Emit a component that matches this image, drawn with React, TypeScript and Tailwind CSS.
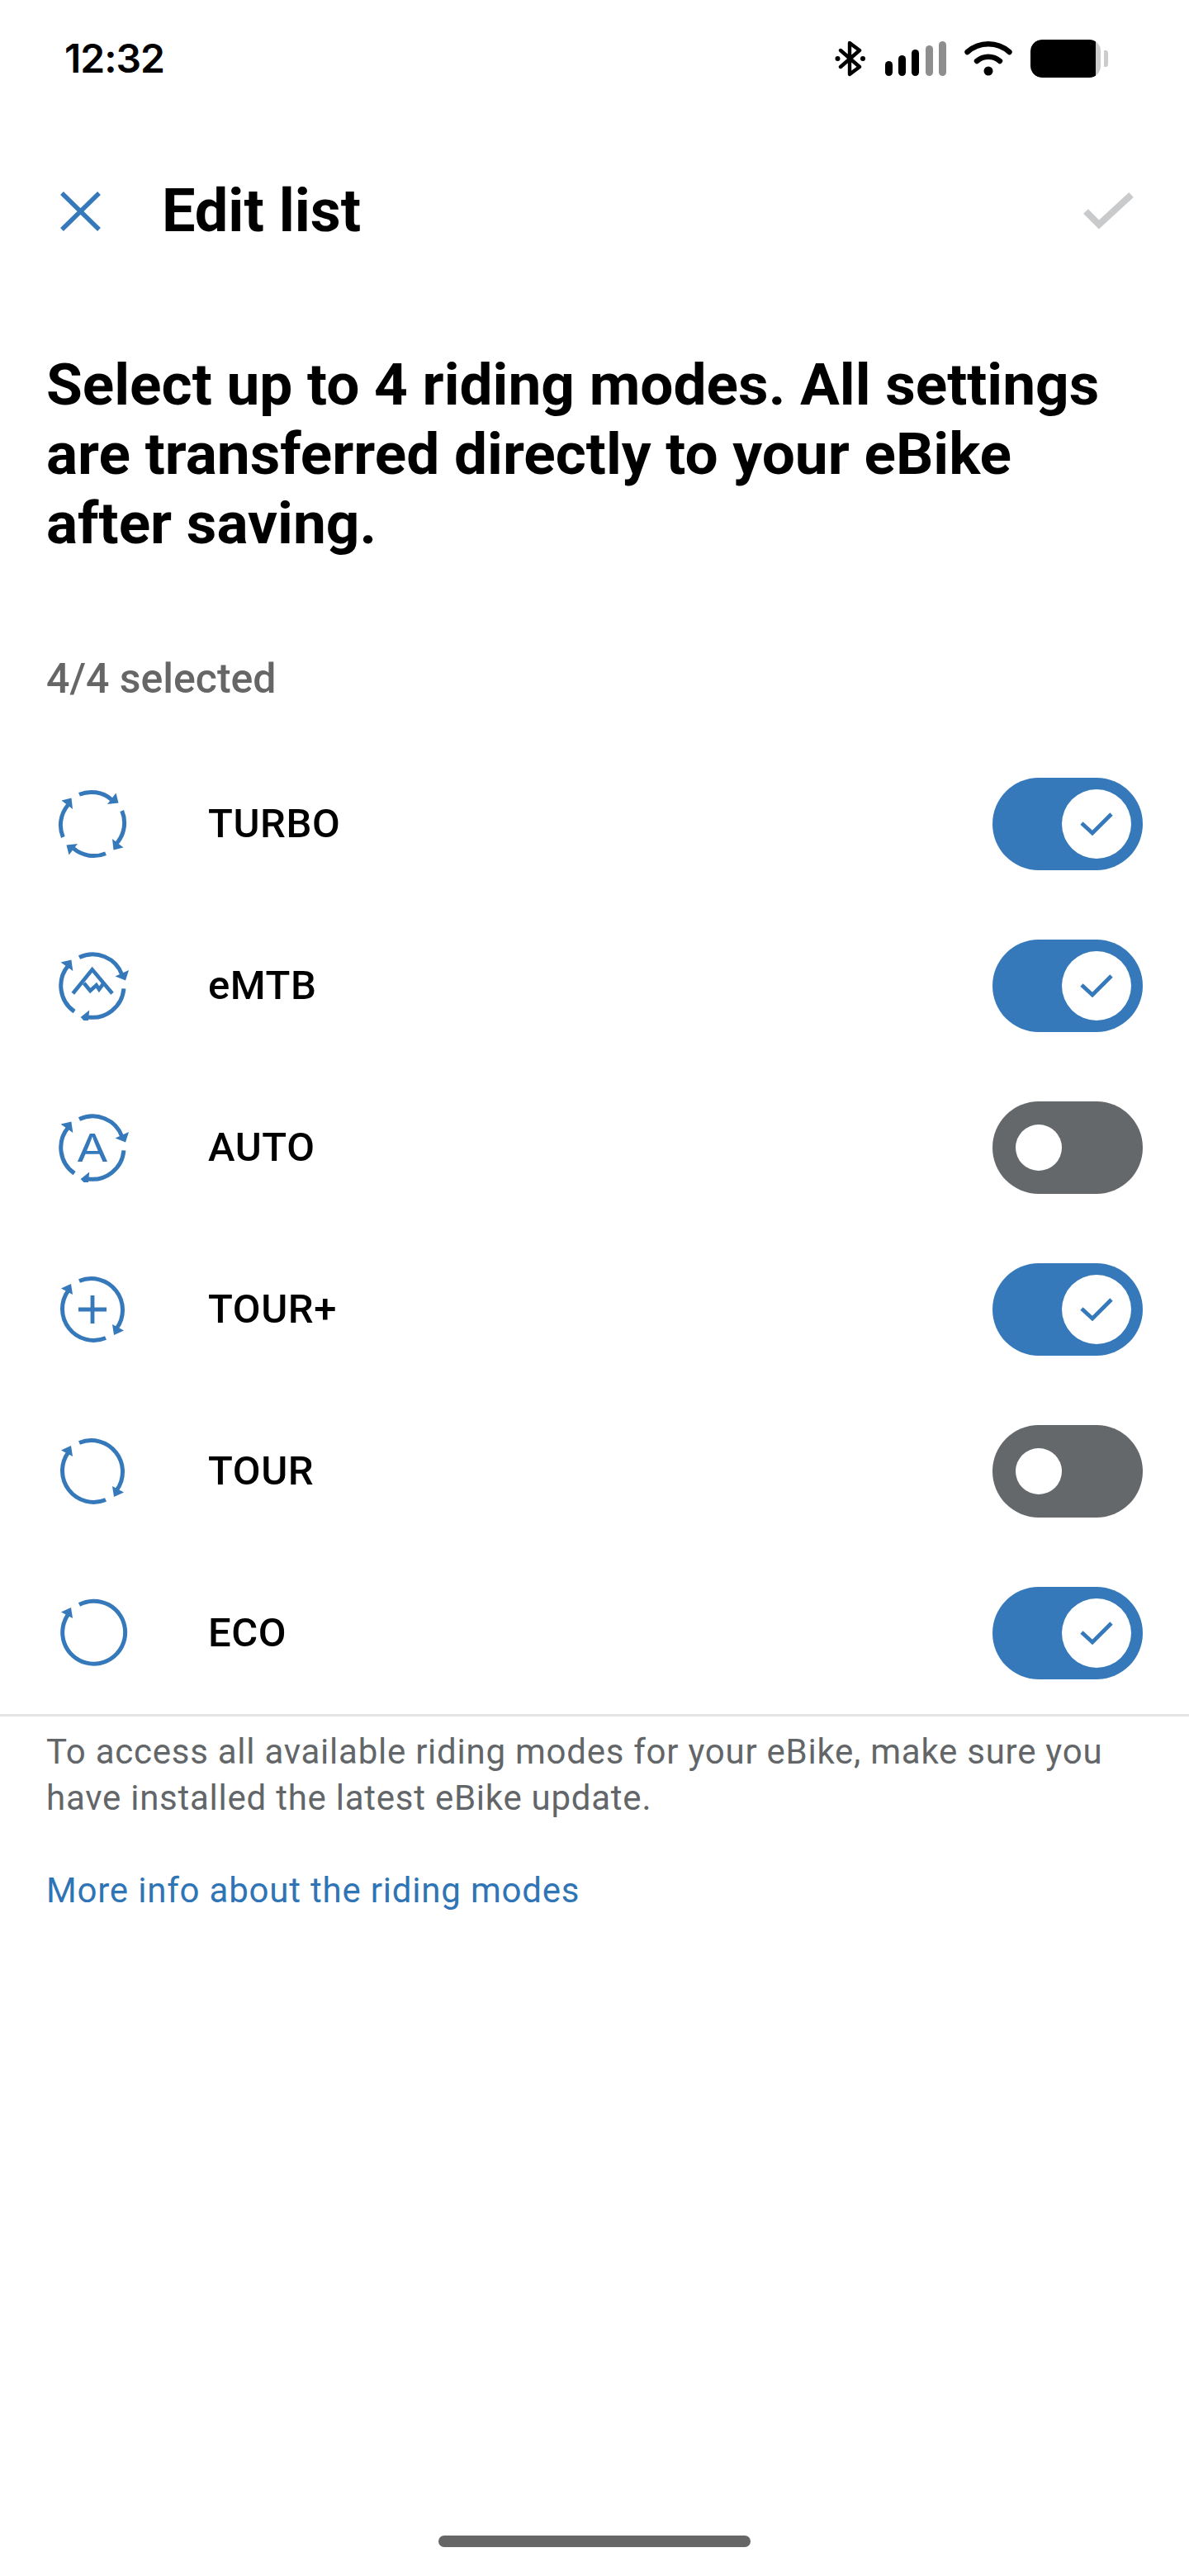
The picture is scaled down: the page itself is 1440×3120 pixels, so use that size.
import React from 'react';

const modes = [
  { name: 'TURBO', kind: 'turbo', on: true },
  { name: 'eMTB', kind: 'emtb', on: true },
  { name: 'AUTO', kind: 'auto', on: false },
  { name: 'TOUR+', kind: 'tourplus', on: true },
  { name: 'TOUR', kind: 'tour', on: false },
  { name: 'ECO', kind: 'eco', on: true },
];

const Seg4 = ({ angle }: { angle: number }) => (
  <g transform={`rotate(${angle} 42 42)`}>
    <path d="M26 6.3A38 38 0 0 1 65 12.3" fill="none" stroke="currentColor" strokeWidth="5" />
    <polygon points="70.5,4.5 73.5,16.5 60,18" fill="currentColor" />
  </g>
);

const Seg3 = ({ angle }: { angle: number }) => (
  <g transform={`rotate(${angle} 42 42)`}>
    <path d="M26 7.5A38 38 0 0 1 78 29" fill="none" stroke="currentColor" strokeWidth="5" />
    <polygon points="86,23 82,35.5 69.5,30.5" fill="currentColor" />
  </g>
);

const Seg2 = ({ angle }: { angle: number }) => (
  <g transform={`rotate(${angle} 42 42)`}>
    <path d="M26 7.5A38 38 0 0 1 71 65.3" fill="none" stroke="currentColor" strokeWidth="5" />
    <polygon points="66,60 80,67.5 68,73" fill="currentColor" />
  </g>
);

const ModeIcon = ({ kind }: { kind: string }) => (
  <svg viewBox="0 0 90 84" className="w-[90px] h-[84px] shrink-0 text-[#3579bb]">
    {kind === 'turbo' && [0, 90, 180, 270].map((a) => <Seg4 key={a} angle={a} />)}
    {kind === 'emtb' && (
      <>
        {[0, 120, 240].map((a) => <Seg3 key={a} angle={a} />)}
        <polyline points="18.3,51.3 41.7,22.3 66,51.3" fill="none" stroke="currentColor" strokeWidth="4.6" />
        <polyline points="31.7,38.7 39.3,48 46.7,41.3 50,46.3 55.7,38.7" fill="none" stroke="currentColor" strokeWidth="4.6" />
      </>
    )}
    {kind === 'auto' && (
      <>
        {[0, 120, 240].map((a) => <Seg3 key={a} angle={a} />)}
        <text x="0" y="0" transform="translate(42 59) scale(1.2 1)" textAnchor="middle" fontSize="47" fontWeight="400" fontFamily="Inter, sans-serif" fill="currentColor">A</text>
      </>
    )}
    {kind === 'tourplus' && (
      <>
        {[0, 180].map((a) => <Seg2 key={a} angle={a} />)}
        <path d="M25 42H59M42 25V59" fill="none" stroke="currentColor" strokeWidth="4.8" />
      </>
    )}
    {kind === 'tour' && [0, 180].map((a) => <Seg2 key={a} angle={a} />)}
    {kind === 'eco' && (
      <>
        <path d="M26 7.5A38 38 0 1 1 13 18.7" fill="none" stroke="currentColor" strokeWidth="5" />
        <polygon points="18,24 4,16.5 16,11" fill="currentColor" />
      </>
    )}
  </svg>
);

const Toggle = ({ on }: { on: boolean }) =>
  on ? (
    <div className="w-[182px] h-[112px] rounded-full bg-[#3579bb] flex items-center justify-end pr-[14px]">
      <div className="w-[84px] h-[84px] rounded-full bg-white flex items-center justify-center">
        <svg viewBox="0 0 40 30" className="w-[40px] h-[30px] text-[#3579bb]">
          <path d="M2 14L15 26L38 3" fill="none" stroke="currentColor" strokeWidth="4.8" />
        </svg>
      </div>
    </div>
  ) : (
    <div className="w-[182px] h-[112px] rounded-full bg-[#65686a] flex items-center pl-[28px]">
      <div className="w-[56px] h-[56px] rounded-full bg-white" />
    </div>
  );

const StatusIcons = () => (
  <div className="flex items-center">
    <svg viewBox="0 0 38 44" className="w-[38px] h-[44px] text-black">
      <path d="M7 12L30 32L18 41V3L30 12L7 32" fill="none" stroke="currentColor" strokeWidth="4.4" strokeLinejoin="round" strokeLinecap="round" />
      <circle cx="3.5" cy="22" r="3" fill="currentColor" />
      <circle cx="34" cy="22" r="3" fill="currentColor" />
    </svg>
    <div className="flex items-end gap-[7.3px] ml-[23px] h-[42px]">
      <div className="w-[9px] h-[18px] rounded-full bg-black" />
      <div className="w-[9px] h-[25px] rounded-full bg-black" />
      <div className="w-[9px] h-[32px] rounded-full bg-black" />
      <div className="w-[9px] h-[37px] rounded-full bg-[#8e8e8e]" />
      <div className="w-[9px] h-[42px] rounded-full bg-[#8e8e8e]" />
    </div>
    <svg viewBox="0 0 58 42" className="w-[58px] h-[42px] ml-[22px] text-black">
      <path d="M3.5 13C18 0 40 0 54.5 13" fill="none" stroke="currentColor" strokeWidth="6.4" strokeLinecap="round" />
      <path d="M15 24C23 17 35 17 43 24" fill="none" stroke="currentColor" strokeWidth="6.4" strokeLinecap="round" />
      <circle cx="29" cy="36" r="5.5" fill="currentColor" />
    </svg>
    <div className="ml-[22px] flex items-center">
      <div className="w-[85px] h-[46px] rounded-[14px] bg-[#cccccc] overflow-hidden">
        <div className="w-[79px] h-[46px] rounded-l-[14px] bg-black" />
      </div>
      <div className="w-[5px] h-[20px] ml-[4px] rounded-r-[3px] bg-[#cccccc]" />
    </div>
  </div>
);

export default function App() {
  return (
    <div className="w-[1440px] h-[3120px] bg-white flex flex-col font-['Roboto',sans-serif]">
      <div className="h-[142px] flex items-center justify-between pl-[78px] pr-[98px]">
        <span className="text-[48px] font-semibold text-black font-['Inter',sans-serif] tracking-[-1px]">12:32</span>
        <StatusIcons />
      </div>

      <div className="h-[228px] flex items-center justify-between pl-[73px] pr-[67px]">
        <div className="flex items-center">
          <svg viewBox="0 0 49 48" className="w-[49px] h-[48px] text-[#3579bb]">
            <path d="M2 2L47 46M47 2L2 46" fill="none" stroke="currentColor" strokeWidth="5.5" />
          </svg>
          <h1 className="ml-[74px] text-[72px] leading-[84px] font-bold text-black">Edit list</h1>
        </div>
        <svg viewBox="0 0 61 47" className="w-[61px] h-[47px] text-[#c8cacb]">
          <path d="M3 23L19 39L58 3" fill="none" stroke="currentColor" strokeWidth="8" />
        </svg>
      </div>

      <h2 className="mt-[54px] px-[56px] text-[71.2px] leading-[84px] font-bold text-black">
        Select up to 4 riding modes. All settings are transferred directly to your eBike after saving.
      </h2>

      <div className="mt-[118px] px-[56px] text-[50px] leading-[56px] font-medium text-[#666666]">4/4 selected</div>

      <div className="mt-[50px] flex flex-col">
        {modes.map((m) => (
          <div key={m.name} className="h-[196px] flex items-center pl-[70px] pr-[56px]">
            <ModeIcon kind={m.kind} />
            <span className="ml-[92px] flex-1 text-[49px] tracking-[0.6px] font-medium text-black">{m.name}</span>
            <Toggle on={m.on} />
          </div>
        ))}
      </div>

      <div className="h-[3px] bg-[#e3e4e4]" />

      <div className="mt-[15px] px-[56px] text-[42px] leading-[56px] text-[#636668] tracking-[0.75px]">
        To access all available riding modes for your eBike, make sure you have installed the latest eBike update.
      </div>
      <div className="mt-[56px] px-[56px] text-[42px] leading-[56px] text-[#2f74b5] tracking-[0.8px]">
        More info about the riding modes
      </div>

      <div className="mt-auto mb-[35px] mx-auto w-[378px] h-[14px] rounded-[7px] bg-[#666666]" />
    </div>
  );
}
